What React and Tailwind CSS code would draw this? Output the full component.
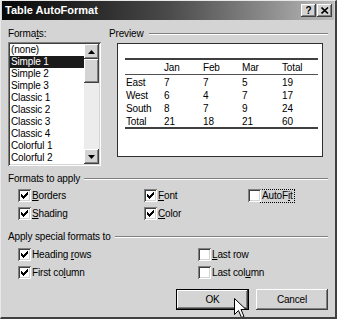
import React from "react";

const raised =
  "shadow-[inset_-1px_-1px_#404040,inset_1px_1px_#ffffff,inset_-2px_-2px_#808080,inset_2px_2px_#d4d4d4]";
const sunken =
  "shadow-[inset_1px_1px_#808080,inset_-1px_-1px_#ffffff,inset_2px_2px_#404040,inset_-2px_-2px_#d4d4d4]";

function Check({ checked }) {
  return (
    <span className={`relative block w-[13px] h-[13px] bg-white shrink-0 ${sunken}`}>
      {checked && (
        <svg className="absolute left-[3px] top-[3px]" width="7" height="7" viewBox="0 0 7 7" shapeRendering="crispEdges">
          <rect x="0" y="2" width="1" height="3" fill="#000" />
          <rect x="1" y="3" width="1" height="3" fill="#000" />
          <rect x="2" y="4" width="1" height="3" fill="#000" />
          <rect x="3" y="3" width="1" height="3" fill="#000" />
          <rect x="4" y="2" width="1" height="3" fill="#000" />
          <rect x="5" y="1" width="1" height="3" fill="#000" />
          <rect x="6" y="0" width="1" height="3" fill="#000" />
        </svg>
      )}
    </span>
  );
}

function CheckItem({ checked, children, focus }) {
  return (
    <div className="flex items-center h-[13px]">
      <Check checked={checked} />
      <span
        className={`leading-[12px] ${
          focus ? "px-[1px] outline outline-1 outline-dotted outline-black" : "ml-[1px]"
        }`}
      >
        {children}
      </span>
    </div>
  );
}

function Etched() {
  return (
    <div className="flex-1 flex flex-col">
      <div className="h-[1px] bg-[#808080]" />
      <div className="h-[1px] bg-white" />
    </div>
  );
}

const items = [
  "(none)",
  "Simple 1",
  "Simple 2",
  "Simple 3",
  "Classic 1",
  "Classic 2",
  "Classic 3",
  "Classic 4",
  "Colorful 1",
  "Colorful 2",
];

const rows = [
  ["East", "7", "7", "5", "19"],
  ["West", "6", "4", "7", "17"],
  ["South", "8", "7", "9", "24"],
  ["Total", "21", "18", "21", "60"],
];

function Row({ cells, h = "h-[13px]" }) {
  return (
    <div className={`grid grid-cols-[39px_39px_39px_40px_1fr] items-center ${h}`}>
      {cells.map((c, i) => (
        <span key={i} className={i === 0 ? "pl-[1px]" : ""}>
          {c}
        </span>
      ))}
    </div>
  );
}

export default function App() {
  return (
    <div
      className="relative w-[337px] h-[319px] overflow-hidden bg-[#d4d4d4] border-t border-l border-t-[#e8e8e8] border-l-[#e8e8e8] border-r-2 border-b-2 border-r-[#404040] border-b-[#404040] text-[10px] tracking-[-0.15px] text-black"
      style={{ fontFamily: '"Liberation Sans", Arial, sans-serif' }}
    >
      {/* Title bar */}
      <div className="h-[19px] mx-[1px] flex items-center bg-gradient-to-r from-[#080808] via-[#4a4a4a] to-[#bcbcbc] pl-[3px] pr-[2px]">
        <span className="text-white font-bold text-[11px] tracking-normal leading-none">Table AutoFormat</span>
        <div className="ml-auto flex items-center gap-[1px]">
          <div className={`w-[15px] h-[13px] bg-[#d4d4d4] ${raised} flex items-center justify-center font-bold text-[10px] leading-none`}>
            ?
          </div>
          <div className={`w-[15px] h-[13px] bg-[#d4d4d4] ${raised} flex items-center justify-center`}>
            <svg width="8" height="7" viewBox="0 0 8 7">
              <path d="M0.5 0.5 L7 6.5 M7 0.5 L0.5 6.5" stroke="#000" strokeWidth="1.6" />
            </svg>
          </div>
        </div>
      </div>

      <div className="px-[7px]">
        {/* Section 1 */}
        <div className="mt-[7px] flex">
          <div className="w-[93px]">
            <div className="h-[13px] leading-[13px]">
              Forma<u>t</u>s:
            </div>
            <div className={`mt-[2px] h-[124px] bg-white ${sunken} p-[2px] flex`}>
              <div className="flex-1 flex flex-col">
                {items.map((it, i) => (
                  <div
                    key={it}
                    className={`h-[12px] leading-[12px] pl-[1px] ${
                      i === 1 ? "bg-[#1a1a1a] text-white" : ""
                    }`}
                  >
                    {it}
                  </div>
                ))}
              </div>
              <div className="w-[15px] flex flex-col bg-[#ececec]">
                <div className={`h-[15px] bg-[#d4d4d4] ${raised} flex items-center justify-center`}>
                  <svg width="7" height="4" viewBox="0 0 7 4">
                    <path d="M3.5 0 L7 4 L0 4Z" fill="#000" />
                  </svg>
                </div>
                <div className={`h-[24px] bg-[#d4d4d4] ${raised}`} />
                <div className="flex-1" />
                <div className={`h-[15px] bg-[#d4d4d4] ${raised} flex items-center justify-center`}>
                  <svg width="7" height="4" viewBox="0 0 7 4">
                    <path d="M0 0 L7 0 L3.5 4Z" fill="#000" />
                  </svg>
                </div>
              </div>
            </div>
          </div>

          <div className="ml-[8px] flex-1">
            <div className="h-[13px] flex items-center">
              <span className="leading-[13px]">Preview</span>
              <div className="ml-[5px] flex-1 flex">
                <Etched />
              </div>
            </div>
            <div className="mt-[3px] ml-[8px] w-[206px] h-[114px] bg-white border border-[#303030] pt-[14px]">
              <div className="ml-[7px] w-[193px]">
                <div className="h-[2px] bg-[#404040]" />
                <Row cells={["", "Jan", "Feb", "Mar", "Total"]} h="h-[14px]" />
                <div className="h-[1px] bg-[#505050]" />
                {rows.map((r) => (
                  <Row key={r[0] + r[4]} cells={r} />
                ))}
                <div className="h-[2px] bg-[#404040]" />
              </div>
            </div>
          </div>
        </div>

        {/* Formats to apply */}
        <div className="mt-[6px] h-[13px] flex items-center">
          <span className="leading-[13px]">Formats to apply</span>
          <div className="ml-[4px] flex-1 flex">
            <Etched />
          </div>
        </div>
        <div className="mt-[4px] pl-[10px] grid grid-cols-[126px_104px_1fr] gap-y-[5px]">
          <CheckItem checked>
            <u>B</u>orders
          </CheckItem>
          <CheckItem checked>
            <u>F</u>ont
          </CheckItem>
          <CheckItem focus>
            AutoF<u>i</u>t
          </CheckItem>
          <CheckItem checked>
            <u>S</u>hading
          </CheckItem>
          <CheckItem checked>
            <u>C</u>olor
          </CheckItem>
          <div />
        </div>

        {/* Apply special formats to */}
        <div className="mt-[10px] h-[13px] flex items-center">
          <span className="leading-[13px]">Apply special formats to</span>
          <div className="ml-[4px] flex-1 flex">
            <Etched />
          </div>
        </div>
        <div className="mt-[5px] pl-[10px] grid grid-cols-[180px_1fr] gap-y-[5px]">
          <CheckItem checked>
            Heading <u>r</u>ows
          </CheckItem>
          <CheckItem>
            <u>L</u>ast row
          </CheckItem>
          <CheckItem checked>
            First co<u>l</u>umn
          </CheckItem>
          <CheckItem>
            Last col<u>u</u>mn
          </CheckItem>
        </div>

        {/* Buttons */}
        <div className="mt-[10px] flex justify-end gap-[7px]">
          <div className="w-[73px] h-[21px] border border-black bg-[#d4d4d4]">
            <div className={`w-full h-full ${raised} flex items-center justify-center`}>OK</div>
          </div>
          <div className={`w-[72px] h-[21px] bg-[#d4d4d4] ${raised} flex items-center justify-center`}>
            Cancel
          </div>
        </div>
      </div>

      {/* Mouse cursor */}
      <svg className="absolute left-[233px] top-[297px]" width="13" height="21" viewBox="0 0 13 21">
        <path
          d="M0.5 0.5 L0.5 16.5 L4.5 12.5 L7.5 19.5 L10 18.5 L7 11.5 L12 11.5 Z"
          fill="#fff"
          stroke="#000"
          strokeWidth="1"
          strokeLinejoin="miter"
        />
      </svg>
    </div>
  );
}
